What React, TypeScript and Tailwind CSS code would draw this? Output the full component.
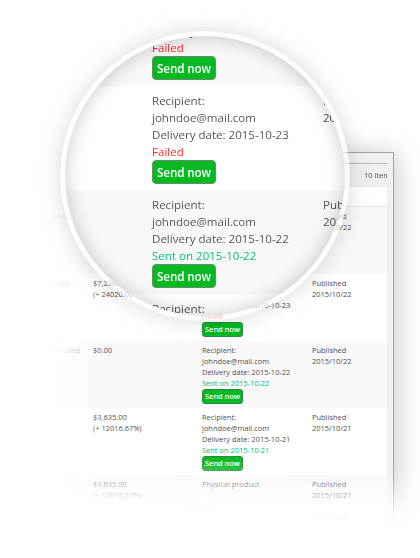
import React from "react";

type Delivery = { date: string; sent: boolean };
type Row = {
  note?: string;
  noteClass?: string;
  price?: string;
  change?: string;
  delivery?: Delivery;
  physical?: boolean;
  published: string;
  striped: boolean;
  height: string;
};

const rows: Row[] = [
  { note: "has been used", noteClass: "w-[80px]", delivery: { date: "2015-10-22", sent: true }, published: "2015/10/22", striped: true, height: "h-[67px]" },
  { note: "Jordan", noteClass: "w-[69px]", price: "$7,236.00", change: "(+ 24020.00%)", delivery: { date: "2015-10-23", sent: false }, published: "2015/10/22", striped: false, height: "h-[67px]" },
  { note: "has been used", noteClass: "w-[80px]", price: "$0.00", delivery: { date: "2015-10-22", sent: true }, published: "2015/10/22", striped: true, height: "h-[67px]" },
  { price: "$3,635.00", change: "(+ 12016.67%)", delivery: { date: "2015-10-21", sent: true }, published: "2015/10/21", striped: false, height: "h-[67px]" },
  { price: "$3,635.00", change: "(+ 12016.67%)", physical: true, published: "2015/10/21", striped: true, height: "h-[33px]" },
  { price: "$0.00", published: "2015/10/21", striped: false, height: "h-[50px]" },
];

function DeliveryCell({ date, sent, large }: Delivery & { large?: boolean }) {
  return (
    <div className="whitespace-nowrap">
      <div>Recipient:</div>
      <div>johndoe@mail.com</div>
      <div>Delivery date: {date}</div>
      {sent ? (
        <div className="text-[#00c27c]">Sent on {date}</div>
      ) : (
        <div className="text-[#ff2424]">Failed</div>
      )}
      <button
        className={
          large
            ? "flex h-[24px] w-[64px] items-center justify-center rounded-[4px] border border-[#6a8a70] bg-[#04b922] text-[11.7px] font-semibold tracking-[-0.15px] text-white"
            : "flex h-[15px] w-[41px] items-center justify-center rounded-[3px] border border-[#2c8a3c] bg-[#04b922] text-[7.6px] font-semibold tracking-[-0.1px] text-white"
        }
      >
        Send now
      </button>
    </div>
  );
}

function ProductRow({ row }: { row: Row }) {
  return (
    <div className={`flex shrink-0 pt-[4px] ${row.height} ${row.striped ? "bg-[#f8f8f8]" : "bg-white"}`}>
      <div className="w-[93px] shrink-0">
        <div className={`text-right whitespace-nowrap ${row.noteClass ?? ""}`}>{row.note}</div>
      </div>
      <div className="w-[109px] shrink-0">
        <div>{row.price}</div>
        <div>{row.change}</div>
      </div>
      <div className="w-[110px] shrink-0">
        {row.delivery && <DeliveryCell {...row.delivery} />}
        {row.physical && <div>Physical product</div>}
      </div>
      <div>
        <div>Published</div>
        <div>{row.published}</div>
      </div>
    </div>
  );
}

function Panel() {
  return (
    <div className="h-[558px] w-[420px] overflow-hidden pt-[152px] [mask-image:linear-gradient(to_right,transparent_49px,rgba(0,0,0,0.1)_62px,rgba(0,0,0,0.36)_80px,rgba(0,0,0,0.85)_94px,black_108px),linear-gradient(183deg,black_466px,rgba(0,0,0,0.88)_477px,rgba(0,0,0,0.5)_496px,rgba(0,0,0,0.28)_507px,rgba(0,0,0,0.06)_518px,transparent_534px)] [mask-composite:intersect]">
      <div className="flex h-[406px] w-[394px] flex-col border-t border-r border-[#a3a3a3] bg-[#f0f0f0] pr-[6px] text-[7.46px] leading-[10.9px] text-[#4f4f4f] shadow-[4px_0_24px_rgba(0,0,0,0.2)]">
        <div className="h-[11px] shrink-0 border-b border-[#b9b9b9]" />
        <div className="flex h-[23px] shrink-0 items-center overflow-hidden border-b border-[#ececec] pl-[364px] whitespace-nowrap">
          10 items
        </div>
        <div className="h-[20px] shrink-0 border-b border-[#e6e6e6] bg-white" />
        {rows.map((row, i) => (
          <ProductRow key={i} row={row} />
        ))}
      </div>
    </div>
  );
}

const magnified = [
  { date: "2015-10-22", sent: false, striped: true, published: "2015/10/22" },
  { date: "2015-10-23", sent: false, striped: false, published: "2015/10/22" },
  { date: "2015-10-22", sent: true, striped: true, published: "2015/10/22" },
  { date: "2015-10-22", sent: true, striped: false, published: "2015/10/22" },
];

function Magnifier() {
  return (
    <div className="absolute top-[31px] left-[60px] h-[290px] w-[290px] rounded-full border-[5px] border-white/65 bg-white bg-clip-padding shadow-[0_0_24px_rgba(0,0,0,0.15)]">
      <div className="h-[280px] w-[280px] overflow-hidden rounded-full">
        <div className="-mt-[54px] text-[11.55px] leading-[17px] text-[#565656]">
          {magnified.map((row, i) => (
            <div key={i} className={`flex h-[104px] pt-[6.4px] pl-[87px] ${row.striped ? "bg-[#f8f8f8]" : "bg-white"}`}>
              <div className="w-[171px] shrink-0">
                <DeliveryCell date={row.date} sent={row.sent} large />
              </div>
              <div>
                <div>Published</div>
                <div>{row.published}</div>
              </div>
            </div>
          ))}
        </div>
      </div>
      <div className="absolute inset-0 rounded-full shadow-[inset_0_0_20px_rgba(0,0,0,0.22)]" />
    </div>
  );
}

export default function App() {
  return (
    <div className="relative h-[558px] w-[420px] overflow-hidden bg-white font-['Open_Sans','Noto_Sans',sans-serif]">
      <Panel />
      <Magnifier />
    </div>
  );
}
